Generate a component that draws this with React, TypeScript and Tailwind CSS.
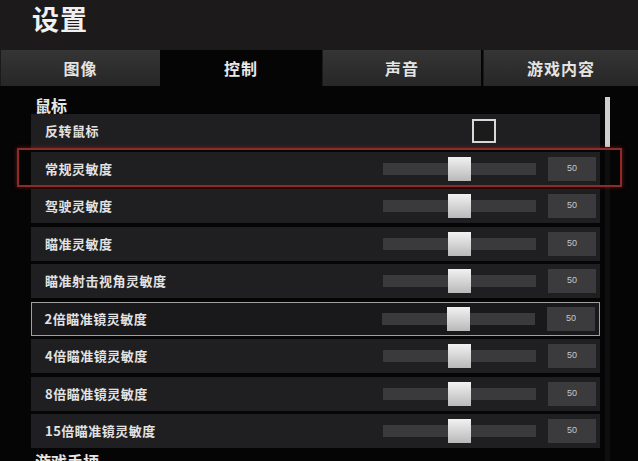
import React from 'react';

const tabs = ['图像', '控制', '声音', '游戏内容'];

const sliders = [
  '常规灵敏度',
  '驾驶灵敏度',
  '瞄准灵敏度',
  '瞄准射击视角灵敏度',
  '2倍瞄准镜灵敏度',
  '4倍瞄准镜灵敏度',
  '8倍瞄准镜灵敏度',
  '15倍瞄准镜灵敏度',
];

const Slider = ({ value }: { value: number }) => (
  <div className="flex items-center mr-[4px]">
    <div className="relative w-[153px] h-[12px] bg-[#3a3a3c]">
      <div className="absolute left-[65px] top-[-6px] w-[23px] h-[24px] bg-gradient-to-b from-[#f2f2f2] to-[#b9b9b9]" />
    </div>
    <div className="ml-[12px] w-[48px] h-[24px] bg-[#3b3b3d] flex items-center justify-center text-[9px] text-[#c8c8c8] font-['Liberation_Sans',sans-serif]">
      {value}
    </div>
  </div>
);

const App = () => {
  return (
    <div className="relative w-[638px] h-[461px] overflow-hidden bg-[#050505] font-['Noto_Sans_CJK_SC',sans-serif] select-none">
      {/* Title */}
      <div className="h-[50px] bg-[#1c1a1a] pl-[32px]">
        <h1 className="text-[27px] leading-[38px] font-bold text-[#f0f0f0] tracking-[1px]">设置</h1>
      </div>

      {/* Tabs */}
      <div className="flex h-[36px]">
        {tabs.map((t, i) => (
          <div
            key={t}
            className={`flex items-center justify-center text-[16px] font-bold ${
              i === 0 ? 'w-[160px]' : i === 1 ? 'w-[162px]' : i === 2 ? 'w-[159px]' : 'flex-1 ml-[2px]'
            } ${
              i === 1
                ? 'bg-[#050505] text-[#e8e8e8]'
                : 'bg-gradient-to-b from-[#353535] to-[#272727] text-[#e4e4e4] border-l border-[#1a1a1a]'
            }`}
          >
            <span className="tracking-[1px]">{t}</span>
          </div>
        ))}
      </div>

      {/* Content */}
      <div className="relative pl-[31px] pt-[10px] w-[600px]">
        <div className="h-[18px] pl-[4px] text-[16px] leading-[18px] font-bold text-[#e6e6e6]">鼠标</div>

        <div className="flex flex-col gap-[3.5px]">
          <div className="h-[34px] bg-[#1f1f21] flex items-center justify-between pl-[14px]">
            <span className="text-[13px] font-bold text-[#e2e2e2] tracking-[0.5px]">反转鼠标</span>
            <div className="w-[24px] h-[24px] border-2 border-[#d8d8d8] bg-[#1b1b1b] mr-[104px]" />
          </div>
          {sliders.map((s, i) => (
            <div
              key={s}
              className={`h-[34px] flex items-center justify-between ${
                i === 4 ? 'border-[1.5px] border-[#a0a0a0] pl-[12.5px] bg-[#19191b]' : 'bg-[#1f1f21] pl-[14px]'
              }`}
            >
              <span className="text-[13px] font-bold text-[#e2e2e2] tracking-[0.5px]">{s}</span>
              <Slider value={50} />
            </div>
          ))}
        </div>

        <div className="mt-[4px] h-[18px] pl-[4px] text-[16px] leading-[18px] font-bold text-[#e6e6e6]">游戏手柄</div>
      </div>

      {/* Scrollbar */}
      <div className="absolute left-[605px] top-[97px] w-[5px] h-[364px] bg-[#0e0e0e]">
        <div className="w-[5px] h-[50px] bg-[#cfcfcf]" />
      </div>

      {/* Highlight */}
      <div className="absolute left-[17px] top-[148px] w-[605px] h-[39px] border-2 border-[#8e2a2a] shadow-[0_0_4px_rgba(180,40,40,0.6)] pointer-events-none" />
    </div>
  );
};

export default App;
